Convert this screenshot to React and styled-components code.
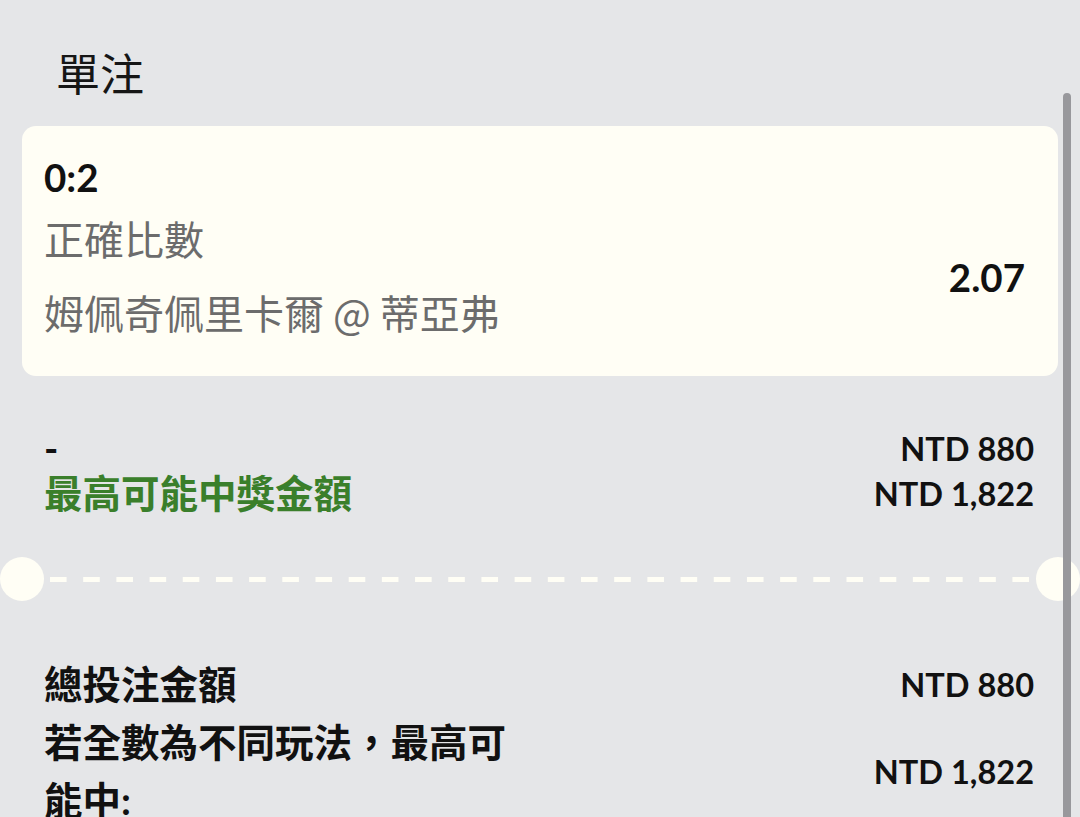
import React from "react";
import styled, { createGlobalStyle } from "styled-components";

const GlobalStyle = createGlobalStyle`
  html, body {
    margin: 0;
    padding: 0;
    height: 100%;
    overflow: hidden;
    background: #e5e6e8;
  }
  body {
    font-family: "Lato", "Noto Sans CJK TC", "Noto Sans", sans-serif;
    color: #111;
  }
  * { box-sizing: border-box; }
`;

const CREAM = "#fffef5";

const Page = styled.div`
  position: relative;
  width: 1080px;
  height: 817px;
  overflow: hidden;
  padding-top: 42px;
  background: #e5e6e8;
`;

const Title = styled.h1`
  margin: 0 0 24px 0;
  padding-left: 56px;
  font-family: "Noto Sans CJK TC", sans-serif;
  font-size: 44px;
  line-height: 60px;
  font-weight: 400;
  color: #161616;
`;

const Card = styled.div`
  margin: 0 22px;
  padding: 20px 33px 34px 22px;
  background: ${CREAM};
  border-radius: 14px;
`;

const Selection = styled.div`
  font-size: 38.5px;
  line-height: 62px;
  font-weight: 700;
  color: #111;
`;

const CardBody = styled.div`
  display: flex;
  align-items: center;
  justify-content: space-between;
`;

const InfoColumn = styled.div`
  display: flex;
  flex-direction: column;
  gap: 14px;
`;

const Info = styled.div`
  font-family: "Noto Sans CJK TC", sans-serif;
  font-size: 40px;
  line-height: 60px;
  font-weight: 400;
  color: #6c6c6c;
`;

const Odds = styled.div`
  font-size: 38.5px;
  font-weight: 700;
  color: #111;
  padding-top: 4px;
`;

const Section = styled.div`
  padding: 0 46px 0 44px;
  margin-top: ${(p) => p.$top}px;
`;

const Row = styled.div`
  display: flex;
  align-items: center;
  justify-content: space-between;
  min-height: ${(p) => p.$height}px;
`;

const Label = styled.div`
  flex: 0 1 50%;
  font-size: 38.5px;
  line-height: ${(p) => p.$lh}px;
  font-weight: 700;
  color: ${(p) => (p.$green ? "#3a7f2b" : "#111")};
`;

const Amount = styled.div`
  font-size: 32.5px;
  font-weight: 700;
  color: #111;
  white-space: nowrap;
`;

const Divider = styled.div`
  display: flex;
  align-items: center;
  height: 44px;
  margin-top: 41px;
`;

const Hole = styled.div`
  flex: 0 0 44px;
  height: 44px;
  border-radius: 50%;
  background: ${CREAM};
`;

const Dashes = styled.div`
  flex: 1;
  margin: 0 6px;
  height: 5px;
  background-image: linear-gradient(to right, ${CREAM} 50%, transparent 50%);
  background-size: 33.2px 5px;
  background-repeat: repeat-x;
`;

const Scrollbar = styled.div`
  position: absolute;
  top: 93px;
  bottom: 0;
  right: 9px;
  width: 8px;
  border-radius: 4px 4px 0 0;
  background: #98989c;
`;

export default function App() {
  return (
    <>
      <GlobalStyle />
      <Page>
        <Title>單注</Title>
        <Card>
          <Selection>0:2</Selection>
          <CardBody>
            <InfoColumn>
              <Info>正確比數</Info>
              <Info>姆佩奇佩里卡爾 @ 蒂亞弗</Info>
            </InfoColumn>
            <Odds>2.07</Odds>
          </CardBody>
        </Card>

        <Section $top={50}>
          <Row $height={45}>
            <Label $lh={45}>-</Label>
            <Amount>NTD 880</Amount>
          </Row>
          <Row $height={45}>
            <Label $lh={45} $green>最高可能中獎金額</Label>
            <Amount>NTD 1,822</Amount>
          </Row>
        </Section>

        <Divider>
          <Hole />
          <Dashes />
          <Hole />
        </Divider>

        <Section $top={55}>
          <Row $height={57.75}>
            <Label $lh={57.75}>總投注金額</Label>
            <Amount>NTD 880</Amount>
          </Row>
          <Row $height={57.75}>
            <Label $lh={57.75}>若全數為不同玩法，最高可能中:</Label>
            <Amount>NTD 1,822</Amount>
          </Row>
        </Section>

        <Scrollbar />
      </Page>
    </>
  );
}
